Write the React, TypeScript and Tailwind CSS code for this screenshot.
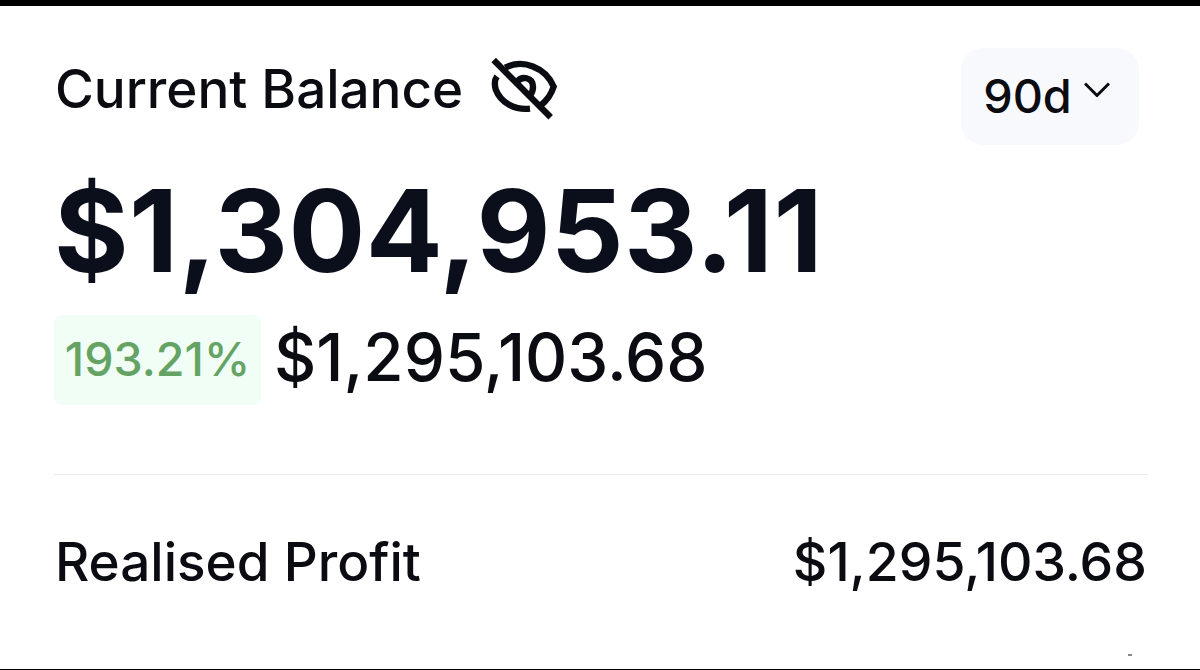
import React from 'react';

export default function App() {
  return (
    <main className="flex h-[670px] w-[1200px] flex-col overflow-hidden border-t-[6px] border-b border-black bg-white font-['Inter',sans-serif] text-[#0b0c12]">
      <header className="flex h-[140px] items-start justify-between pt-[42px] pr-[61px] pl-[55px]">
        <div className="flex items-center gap-[26px] pt-px">
          <h1 className="text-[53px] leading-[81px] font-medium tracking-[-0.03px] whitespace-nowrap">Current Balance</h1>
          <svg className="h-[68px] w-[72px]" viewBox="60 45 216 204" fill="none" stroke="currentColor" strokeWidth="19">
            <path d="M109 80C160 53 230 78 254 137C247 160 235 178 214 194" />
            <path d="M84 106C75 118 76 129 80 145C95 184 135 208 183 203" />
            <path d="M144 123C158 103 191 109 192 136C193 150 189 157 182 165" />
            <path d="M74 57L245 229" />
          </svg>
        </div>
        <button className="flex h-[97px] w-[178px] items-center justify-center gap-3 rounded-[22px] bg-[#f8f9fc] pr-[7px]">
          <span className="text-[46.8px] leading-none font-medium">90d</span>
          <svg className="mb-[14px] h-4 w-[26px]" viewBox="0 0 26 16" fill="none" stroke="currentColor" strokeWidth="3" strokeLinejoin="round"><path d="M1 1.5l12 12L25 1.5" /></svg>
        </button>
      </header>
      <div className="h-[168px] pl-[54px] text-[114px] leading-[169px] font-bold tracking-[0.4px] whitespace-nowrap text-[#0b0e1b]">$1,304,953.11</div>
      <div className="flex h-[91px] items-center gap-[13px] pl-[54px]">
        <span className="flex h-[90px] w-[207px] items-center justify-center rounded-lg bg-[#f1fef5] text-[46.6px] font-medium text-[#65a365]">193.21%</span>
        <span className="pb-[3px] text-[65.5px] leading-none font-medium">$1,295,103.68</span>
      </div>
      <div className="mt-[69px] mr-[52px] ml-[53px] h-px bg-[#ebebed]" />
      <div className="flex h-[174px] items-center justify-between pt-px pr-[53px] pl-[55px] font-medium">
        <span className="text-[53px]">Realised Profit</span><span className="text-[53.5px]">$1,295,103.68</span>
      </div>
      <div className="mt-[5px] mr-[68px] h-[2px] w-1 shrink-0 self-end bg-[#888]" />
    </main>
  );
}
